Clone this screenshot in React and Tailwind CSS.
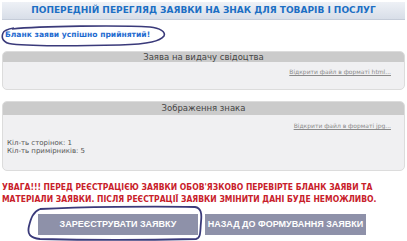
export default function App() {
  return (
    <div className="relative w-[407px] h-[241px] bg-white overflow-hidden font-['DejaVu_Sans',sans-serif]">
      <div className="mx-[2px] mt-[2px] h-[18px] flex items-center justify-center bg-gradient-to-b from-[#eef1f6] to-[#d8dee8] border-b border-[#c5ccd8]">
        <span className="text-[9px] font-bold text-[#1c6fc4]">
          ПОПЕРЕДНІЙ ПЕРЕГЛЯД ЗАЯВКИ НА ЗНАК ДЛЯ ТОВАРІВ І ПОСЛУГ
        </span>
      </div>

      <div className="mt-[9px] ml-[5px] h-[12px] text-[7.6px] font-bold text-[#1f6bd0] leading-[12px]">
        Бланк заяви успішно прийнятий!
      </div>

      <div className="mx-[2px] mt-[10px] h-[39px] rounded-[5px] border border-[#dcdcdc] bg-[#f0f0f2] overflow-hidden">
        <div className="h-[10px] bg-[#cbcbcb] text-center text-[8.5px] leading-[10px] text-[#444]">
          Заява на видачу свідоцтва
        </div>
        <div className="flex justify-end pr-[13px] pt-[5px]">
          <span className="text-[6px] text-[#8a8a8a] underline">Відкрити файл в форматі html...</span>
        </div>
      </div>

      <div className="mx-[2px] mt-[11px] h-[70px] rounded-[5px] border border-[#dcdcdc] bg-[#f0f0f2] overflow-hidden">
        <div className="h-[13px] bg-[#cbcbcb] text-center text-[8.5px] leading-[13px] text-[#444]">
          Зображення знака
        </div>
        <div className="flex justify-end pr-[13px] pt-[6px]">
          <span className="text-[6px] text-[#8a8a8a] underline">Відкрити файл в форматі jpg...</span>
        </div>
        <div className="pl-[4px] pt-[9px] text-[7px] leading-[8px] text-[#555]">
          <div>Кіл-ть сторінок: 1</div>
          <div>Кіл-ть примірників: 5</div>
        </div>
      </div>

      <div className="mt-[10px] ml-[2px] text-[8.5px] font-bold leading-[12px] text-[#c8202a] whitespace-nowrap font-['DejaVu_Sans_Condensed','DejaVu_Sans',sans-serif]">
        <div>УВАГА!!! ПЕРЕД РЕЄСТРАЦІЄЮ ЗАЯВКИ ОБОВ'ЯЗКОВО ПЕРЕВІРТЕ БЛАНК ЗАЯВИ ТА</div>
        <div>МАТЕРІАЛИ ЗАЯВКИ. ПІСЛЯ РЕЄСТРАЦІЇ ЗАЯВКИ ЗМІНИТИ ДАНІ БУДЕ НЕМОЖЛИВО.</div>
      </div>

      <div className="mt-[9px] flex gap-[7px] pl-[38px] font-['Liberation_Sans',sans-serif]">
        <div className="w-[160px] h-[21px] flex items-center justify-center bg-[#8e91a9] text-white text-[9px] font-bold">
          ЗАРЕЄСТРУВАТИ ЗАЯВКУ
        </div>
        <div className="w-[161px] h-[21px] flex items-center justify-center bg-[#8e91a9] text-white text-[9px] font-bold">
          НАЗАД ДО ФОРМУВАННЯ ЗАЯВКИ
        </div>
      </div>

      <svg className="absolute left-0 top-0 pointer-events-none" width="407" height="241">
        <path
          d="M12 29 C40 26 120 25 150 27 C160 28 166 32 164 36 C160 41 150 44 120 45 C80 46 30 46 12 44 C3 43 1 38 3 33 C4 30 8 29 14 28"
          fill="none"
          stroke="#3a3a7a"
          strokeWidth="1.6"
        />
        <path
          d="M40 209 C80 207 150 206 195 207 C201 208 202 213 201 222 C200 232 201 238 196 239 C150 240 80 240 40 239 C30 238 27 234 29 226 C31 218 33 212 40 209"
          fill="none"
          stroke="#3a3a7a"
          strokeWidth="1.8"
        />
      </svg>
    </div>
  );
}
